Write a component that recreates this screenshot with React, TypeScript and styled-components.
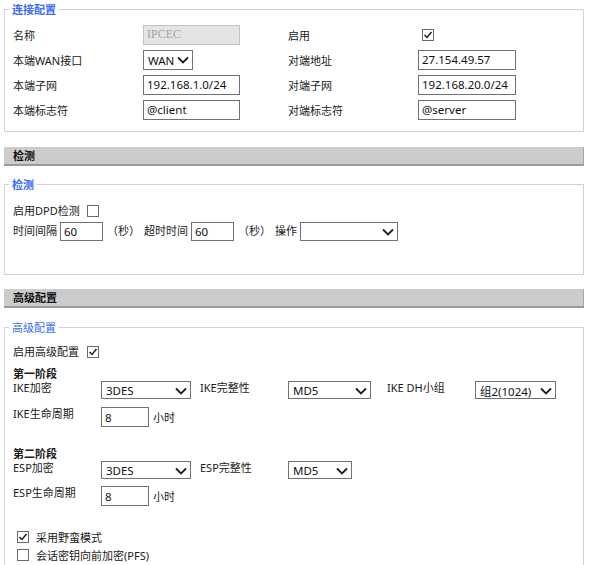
import styled, { createGlobalStyle } from "styled-components";

const GlobalStyle = createGlobalStyle`
  body {
    margin: 0;
    background: #fff;
    font-family: "Noto Sans", "Noto Sans CJK SC", sans-serif;
    font-size: 11px;
    color: #1a1a1a;
  }
`;

const Page = styled.div`
  width: 580px;
  padding: 1px 11px 0 4px;
`;

const Group = styled.fieldset<{ $pt: number; $pb: number }>`
  margin: 0;
  min-width: 0;
  border: 1px solid #d2d2d2;
  padding: ${(p) => p.$pt}px 0 ${(p) => p.$pb}px 4px;
`;

const Legend = styled.legend<{ $bold?: boolean }>`
  padding: 0 3px;
  color: #3b6cf6;
  font-family: "Noto Sans CJK SC", sans-serif;
  font-weight: ${(p) => (p.$bold ? 700 : 400)};
  line-height: 16px;
`;

const SectionBar = styled.div<{ $mt: number }>`
  margin-top: ${(p) => p.$mt}px;
  height: 17px;
  line-height: 17px;
  padding-left: 9px;
  background: #cccccc;
  border-bottom: 2px solid #9c9c9c;
  border-right: 1px solid #a8a8a8;
  font-weight: 700;
  color: #111;
`;

const FormGrid = styled.div`
  display: grid;
  grid-template-columns: 130px 145px 130px 1fr;
  grid-auto-rows: 25px;
  align-items: center;
  padding-left: 4px;
`;

const Row = styled.div<{ $h?: number; $mt?: number; $align?: string }>`
  display: flex;
  align-items: ${(p) => p.$align ?? "center"};
  height: ${(p) => p.$h ?? 20}px;
  margin-top: ${(p) => p.$mt ?? 0}px;
  padding-left: 4px;
`;

const Label = styled.span<{ $w?: number; $mr?: number; $ml?: number; $mt?: number }>`
  flex: none;
  width: ${(p) => (p.$w ? `${p.$w}px` : "auto")};
  margin-right: ${(p) => p.$mr ?? 0}px;
  margin-left: ${(p) => p.$ml ?? 0}px;
  margin-top: ${(p) => p.$mt ?? 0}px;
  line-height: 14px;
  white-space: nowrap;
`;

const Stage = styled.div<{ $mt: number }>`
  margin-top: ${(p) => p.$mt}px;
  padding-left: 4px;
  line-height: 14px;
  font-weight: 700;
`;

const TextInput = styled.input<{ $w: number; $h?: number }>`
  box-sizing: border-box;
  flex: none;
  width: ${(p) => p.$w}px;
  height: ${(p) => p.$h ?? 20}px;
  margin: 0;
  padding: 0 3px;
  border: 1px solid #717171;
  border-radius: 0;
  background: #fff;
  font: 11.5px "Noto Sans", sans-serif;
  color: #111;
  outline: none;

  &:disabled {
    background: #e4e4e4;
    border-color: #c2c2c2;
    color: #a4a4a4;
    font-family: "Liberation Serif", serif;
    font-size: 12px;
  }
`;

const SelectBox = styled.div<{ $w: number; $h?: number; $mr?: number }>`
  box-sizing: border-box;
  flex: none;
  display: flex;
  align-items: center;
  justify-content: space-between;
  width: ${(p) => p.$w}px;
  height: ${(p) => p.$h ?? 18}px;
  margin-right: ${(p) => p.$mr ?? 0}px;
  padding: 1px 3px 0 4px;
  border: 1px solid #717171;
  background: #fff;
  font-size: 11.5px;
  color: #111;
`;

const Box = styled.span`
  box-sizing: border-box;
  flex: none;
  display: inline-flex;
  align-items: center;
  justify-content: center;
  width: 12px;
  height: 12px;
  border: 1px solid #6a6a6a;
  background: #fff;
`;

const Chevron = () => (
  <svg width="12" height="8" viewBox="0 0 12 8">
    <polyline points="1,1.5 6,6.5 11,1.5" fill="none" stroke="#1e1e1e" strokeWidth="1.8" />
  </svg>
);

const Check = ({ on }: { on?: boolean }) => (
  <Box>
    {on && (
      <svg width="10" height="10" viewBox="0 0 10 10">
        <polyline points="1.5,5 4,7.5 8.5,2" fill="none" stroke="#1e1e1e" strokeWidth="1.5" />
      </svg>
    )}
  </Box>
);

const Select = ({ w, value, mr, h }: { w: number; value: string; mr?: number; h?: number }) => (
  <SelectBox $w={w} $mr={mr} $h={h}>
    <span>{value}</span>
    <Chevron />
  </SelectBox>
);

const CheckCell = styled.span`
  padding-left: 4px;
  display: flex;
`;

const CheckLine = styled.div`
  display: flex;
  align-items: center;
  height: 18px;
  padding-left: 8px;
  gap: 7px;
`;

const Spacer = styled.div<{ $h: number }>`
  height: ${(p) => p.$h}px;
`;

export default function App() {
  return (
    <>
      <GlobalStyle />
      <Page>
        <Group $pt={5} $pb={9}>
          <Legend $bold>连接配置</Legend>
          <FormGrid>
            <span>名称</span>
            <TextInput $w={97} defaultValue="IPCEC" disabled />
            <span>启用</span>
            <CheckCell>
              <Check on />
            </CheckCell>

            <span>本端WAN接口</span>
            <Select w={50} h={20} value="WAN" />
            <span>对端地址</span>
            <TextInput $w={98} defaultValue="27.154.49.57" />

            <span>本端子网</span>
            <TextInput $w={97} defaultValue="192.168.1.0/24" />
            <span>对端子网</span>
            <TextInput $w={98} defaultValue="192.168.20.0/24" />

            <span>本端标志符</span>
            <TextInput $w={97} defaultValue="@client" />
            <span>对端标志符</span>
            <TextInput $w={98} defaultValue="@server" />
          </FormGrid>
        </Group>

        <SectionBar $mt={15}>检测</SectionBar>

        <Spacer $h={10} />
        <Group $pt={8} $pb={33}>
          <Legend $bold>检测</Legend>
          <Row $h={21}>
            <Label $mr={7}>启用DPD检测</Label>
            <Check />
          </Row>
          <Row $h={20}>
            <Label $mr={3}>时间间隔</Label>
            <TextInput $w={43} $h={19} defaultValue="60" />
            <Label $ml={4} $mr={4}>（秒）</Label>
            <Label $mr={3}>超时时间</Label>
            <TextInput $w={43} $h={19} defaultValue="60" />
            <Label $ml={4} $mr={4}>（秒）</Label>
            <Label $mr={3}>操作</Label>
            <Select w={98} h={19} value="" />
          </Row>
        </Group>

        <SectionBar $mt={14}>高级配置</SectionBar>

        <Spacer $h={11} />
        <Group $pt={7} $pb={20}>
          <Legend>高级配置</Legend>
          <Row $h={20}>
            <Label $mr={8}>启用高级配置</Label>
            <Check on />
          </Row>

          <Stage $mt={5}>第一阶段</Stage>
          <Row $h={20} $align="flex-start">
            <Label $w={88}>IKE加密</Label>
            <Select w={90} value="3DES" mr={9} />
            <Label $w={88}>IKE完整性</Label>
            <Select w={83} value="MD5" mr={16} />
            <Label $w={88}>IKE DH小组</Label>
            <Select w={81} value="组2(1024)" />
          </Row>
          <Row $h={20} $mt={6} $align="flex-start">
            <Label $w={88}>IKE生命周期</Label>
            <TextInput $w={48} defaultValue="8" />
            <Label $ml={4} $mt={4}>小时</Label>
          </Row>

          <Stage $mt={20}>第二阶段</Stage>
          <Row $h={20} $align="flex-start">
            <Label $w={88}>ESP加密</Label>
            <Select w={90} value="3DES" mr={9} />
            <Label $w={88}>ESP完整性</Label>
            <Select w={64} value="MD5" />
          </Row>
          <Row $h={20} $mt={5} $align="flex-start">
            <Label $w={88}>ESP生命周期</Label>
            <TextInput $w={48} defaultValue="8" />
            <Label $ml={4} $mt={4}>小时</Label>
          </Row>

          <Spacer $h={22} />
          <CheckLine>
            <Check on />
            <span>采用野蛮模式</span>
          </CheckLine>
          <CheckLine>
            <Check />
            <span>会话密钥向前加密(PFS)</span>
          </CheckLine>
        </Group>
      </Page>
    </>
  );
}
